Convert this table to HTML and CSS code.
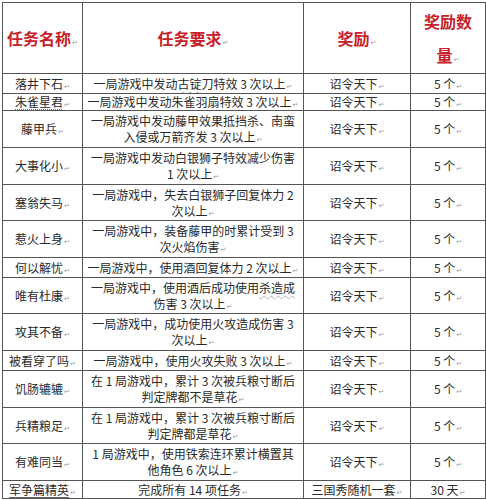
FILE: index.html
```html
<!DOCTYPE html>
<html>
<head>
<meta charset="utf-8">
<link rel="stylesheet" href="styles.css">
</head>
<body>
<table class="tasks">
  <colgroup>
    <col class="c1"><col class="c2"><col class="c3"><col class="c4">
  </colgroup>
  <tr class="head">
    <th>任务名称<span class="pm">↵</span></th>
    <th>任务要求<span class="pm">↵</span></th>
    <th>奖励<span class="pm">↵</span></th>
    <th class="two">奖励数<br>量<span class="pm">↵</span></th>
  </tr>
  <tr class="h20"><td>落井下石<span class="pm">↵</span></td><td>一局游戏中发动<span class="wavy">古锭</span>刀特效 3 次以上<span class="pm">↵</span></td><td>诏令天下<span class="pm">↵</span></td><td>5 个<span class="pm">↵</span></td></tr>
  <tr class="h17"><td><span class="dot">朱雀星君</span><span class="pm">↵</span></td><td>一局游戏中发动朱雀羽扇特效 3 次以上<span class="pm">↵</span></td><td>诏令天下<span class="pm">↵</span></td><td>5 个<span class="pm">↵</span></td></tr>
  <tr class="h37"><td>藤甲兵<span class="pm">↵</span></td><td>一局游戏中发动藤甲效果抵挡杀、南蛮<br>入侵或万箭齐发 3 次以上<span class="pm">↵</span></td><td>诏令天下<span class="pm">↵</span></td><td>5 个<span class="pm">↵</span></td></tr>
  <tr class="h37"><td>大事化小<span class="pm">↵</span></td><td>一局游戏中发动白银狮子特效减少伤害<br>1 次以上<span class="pm">↵</span></td><td>诏令天下<span class="pm">↵</span></td><td>5 个<span class="pm">↵</span></td></tr>
  <tr class="h36"><td>塞翁失马<span class="pm">↵</span></td><td>一局游戏中，失去白银狮子回复体力 2<br>次以上<span class="pm">↵</span></td><td>诏令天下<span class="pm">↵</span></td><td>5 个<span class="pm">↵</span></td></tr>
  <tr class="h37"><td>惹火上身<span class="pm">↵</span></td><td>一局游戏中，装备藤甲的时累计受到 3<br>次火焰伤害<span class="pm">↵</span></td><td>诏令天下<span class="pm">↵</span></td><td>5 个<span class="pm">↵</span></td></tr>
  <tr class="h20"><td>何以解忧<span class="pm">↵</span></td><td>一局游戏中，使用酒回复体力 2 次以上<span class="pm">↵</span></td><td>诏令天下<span class="pm">↵</span></td><td>5 个<span class="pm">↵</span></td></tr>
  <tr class="h36"><td>唯有杜康<span class="pm">↵</span></td><td>一局游戏中，使用酒后成功使用<span class="wavy">杀造成</span><br>伤害 3 次以上<span class="pm">↵</span></td><td>诏令天下<span class="pm">↵</span></td><td>5 个<span class="pm">↵</span></td></tr>
  <tr class="h37"><td>攻其不备<span class="pm">↵</span></td><td>一局游戏中，成功使用火攻造成伤害 3<br>次以上<span class="pm">↵</span></td><td>诏令天下<span class="pm">↵</span></td><td>5 个<span class="pm">↵</span></td></tr>
  <tr class="h20"><td>被看穿了吗<span class="pm">↵</span></td><td>一局游戏中，使用火攻失败 3 次以上<span class="pm">↵</span></td><td>诏令天下<span class="pm">↵</span></td><td>5 个<span class="pm">↵</span></td></tr>
  <tr class="h37"><td>饥肠辘辘<span class="pm">↵</span></td><td>在 1 局游戏中，累计 3 次被兵粮寸断后<br>判定牌都不是草花<span class="pm">↵</span></td><td>诏令天下<span class="pm">↵</span></td><td>5 个<span class="pm">↵</span></td></tr>
  <tr class="h36"><td>兵精粮足<span class="pm">↵</span></td><td>在 1 局游戏中，累计 3 次被兵粮寸断后<br>判定牌都是草花<span class="pm">↵</span></td><td>诏令天下<span class="pm">↵</span></td><td>5 个<span class="pm">↵</span></td></tr>
  <tr class="h37"><td>有难同当<span class="pm">↵</span></td><td>1 局游戏中，使用铁索连环累计横置其<br>他角色 6 次以上<span class="pm">↵</span></td><td>诏令天下<span class="pm">↵</span></td><td>5 个<span class="pm">↵</span></td></tr>
  <tr class="h18"><td><span class="uline">军争篇精英</span><span class="pm">↵</span></td><td>完成所有 14 项任务<span class="pm">↵</span></td><td>三国秀随机一套<span class="pm">↵</span></td><td>30 天<span class="pm">↵</span></td></tr>
</table>
</body>
</html>
```
FILE: styles.css
```css
html, body {
  margin: 0;
  padding: 0;
  background: #ffffff;
}
body {
  padding: 2px 0 0 2px;
  font-family: "Noto Sans CJK SC", "Noto Sans", sans-serif;
  color: #222222;
}
.tasks {
  border-collapse: collapse;
  table-layout: fixed;
  width: 483px;
}
.c1 { width: 80px; }
.c2 { width: 221px; }
.c3 { width: 107px; }
.c4 { width: 75px; }
.tasks th, .tasks td {
  border: 1px solid #555555;
  padding: 0;
  text-align: center;
  vertical-align: middle;
  white-space: nowrap;
  overflow: hidden;
}
.tasks td {
  font-size: 12px;
  line-height: 16px;
  font-weight: 400;
  color: #2a2a2a;
}
.tasks th {
  font-size: 16px;
  line-height: 34px;
  font-weight: 700;
  color: #c8202a;
}
.head { height: 71px; }
.h20 { height: 20px; }
.h17 { height: 17px; }
.h18 { height: 18px; }
.h36 { height: 36px; }
.h37 { height: 37px; }
.pm {
  font-family: "DejaVu Sans", sans-serif;
  font-size: 7px;
  line-height: 0;
  font-weight: 400;
  color: #9a9a9a;
  margin-left: 1px;
}
.wavy {
  text-decoration: underline wavy #a8b8a8;
  text-decoration-thickness: 1px;
  text-underline-offset: 2px;
}
.dot {
  text-decoration: underline dotted #777777;
  text-underline-offset: 2px;
}
.uline {
  text-decoration: underline #666666;
  text-underline-offset: 2px;
}
```
